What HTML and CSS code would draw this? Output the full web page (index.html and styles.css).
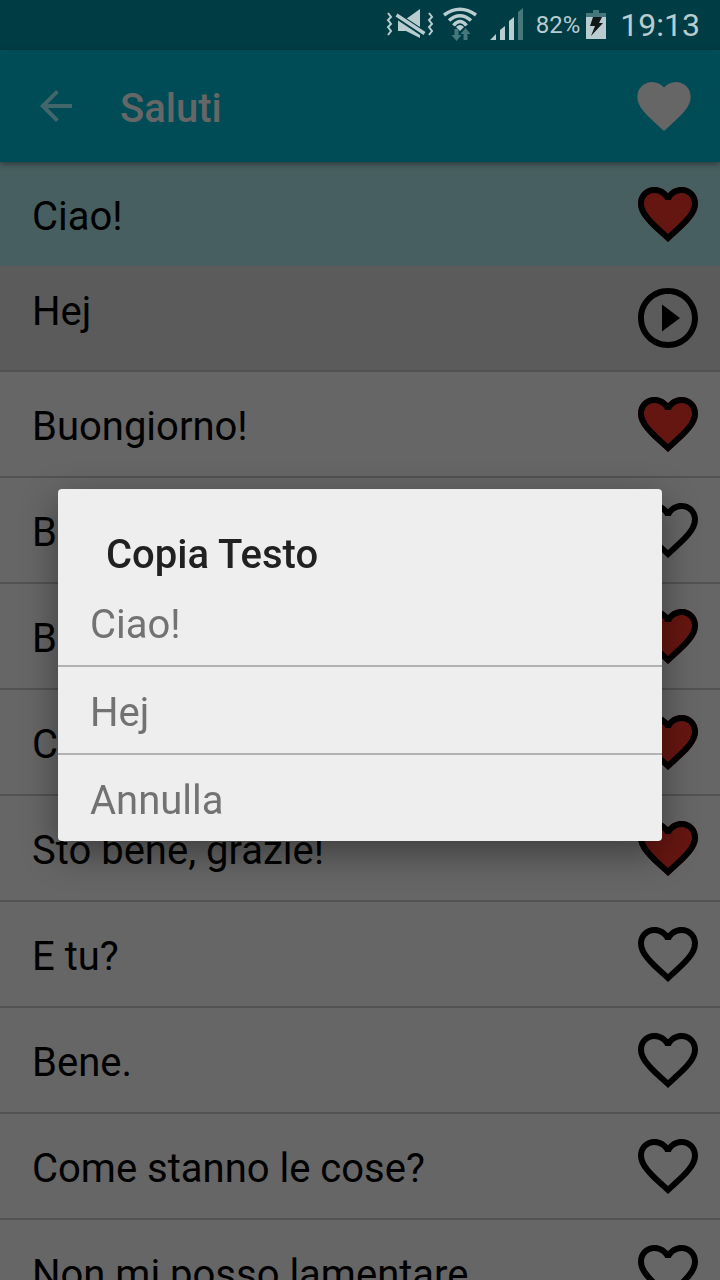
FILE: index.html
```html
<!DOCTYPE html>
<html lang="it">
<head>
    <meta charset="UTF-8">
    <meta name="viewport" content="width=device-width, initial-scale=1.0">
    <title>Saluti</title>
    <link rel="stylesheet" href="styles.css">
</head>
<body>
    <!-- Icone riutilizzate nella lista -->
    <svg class="defs" aria-hidden="true">
        <symbol id="cuore" viewBox="0 0 24 24">
            <path d="M12 21.35l-1.45-1.32C5.4 15.36 2 12.28 2 8.5 2 5.42 4.42 3 7.5 3c1.74 0 3.41.81 4.5 2.09C13.09 3.81 14.76 3 16.5 3 19.58 3 22 5.42 22 8.5c0 3.78-3.4 6.86-8.55 11.54L12 21.35z"/>
        </symbol>
        <symbol id="bordo" viewBox="0 0 24 24">
            <path d="M16.5 3c-1.74 0-3.41.81-4.5 2.09C10.91 3.81 9.24 3 7.5 3 4.42 3 2 5.42 2 8.5c0 3.78 3.4 6.86 8.55 11.54L12 21.35l1.45-1.32C18.6 15.36 22 12.28 22 8.5 22 5.42 19.58 3 16.5 3zm-4.4 15.55l-.1.1-.1-.1C7.14 14.24 4 11.39 4 8.5 4 6.5 5.5 5 7.5 5c1.54 0 3.04.99 3.57 2.36h1.87C13.46 5.99 14.96 5 16.5 5c2 0 3.5 1.5 3.5 3.5 0 2.89-3.14 5.74-7.9 10.05z"/>
        </symbol>
    </svg>

    <!-- Barra di stato -->
    <div class="status">
        <svg class="ico-muto" viewBox="0 0 52 38" width="52" height="38">
            <path d="M14 13h8l14-10v29l-14-7h-8z" fill="#b9cccf"/>
            <path d="M11 8.500l31 20.500" stroke="#003c43" stroke-width="6.500"/>
            <path d="M12.500 9l28 18.500" stroke="#b9cccf" stroke-width="3.500"/>
            <path d="M4 7l3 4-3 3 3 4-3 3 3 4-3 4M45 7l3 4-3 3 3 4-3 3 3 4-3 4" fill="none" stroke="#b9cccf" stroke-width="2"/>
        </svg>
        <svg class="ico-wifi" viewBox="0 0 36 40" width="36" height="40">
            <g fill="none" stroke="#b9cccf" stroke-width="3.500">
                <path d="M2 10Q18-1.500 34 10"/>
                <path d="M7 15.500Q18 6 29 15.500"/>
                <path d="M11.500 20.500Q18 12.500 24.500 20.500"/>
            </g>
            <path d="M14 22q4-4 8 0l-4 4z" fill="#b9cccf"/>
            <path d="M12.500 24h4v6h3l-5 6-5-6h3zM21.500 35v-6h-3l5-6 5 6h-3v6z" fill="#46777c"/>
        </svg>
        <svg class="ico-segnale" viewBox="0 0 34 34" width="34" height="34">
            <path d="M0 32l6-6v6zM10 32V22l5-4v14zM19 32V13l5-4v23z" fill="#b9cccf"/>
            <path d="M28 32V4l5-4v32z" fill="#46777c"/>
        </svg>
        <span class="carica">82%</span>
        <svg class="ico-batteria" viewBox="0 0 20 32" width="20" height="32">
            <path d="M0 4h7V1h6v3h7v5H0z" fill="#46777c"/>
            <path d="M0 8h20v22H0z" fill="#b9cccf"/>
            <path d="M7 8h9l-3 6h4L5 27l4-10H4z" fill="#101818"/>
        </svg>
        <span class="ora">19:13</span>
    </div>

    <header class="toolbar">
        <button class="btn" aria-label="Indietro">
            <svg class="ico-indietro" viewBox="0 0 24 24"><path d="M20 11H7.830l5.590-5.590L12 4l-8 8 8 8 1.410-1.410L7.830 13H20v-2z"/></svg>
        </button>
        <h1>Saluti</h1>
        <button class="btn" aria-label="Preferiti">
            <svg class="ico-preferiti"><use href="#cuore"/></svg>
        </button>
    </header>

    <!-- Lista delle frasi -->
    <ul class="lista">
        <li class="riga attiva">
            <span>Ciao!</span>
            <button class="btn" aria-label="Preferito"><svg class="ico"><use class="rosso" href="#cuore"/><use href="#bordo"/></svg></button>
        </li>
        <li class="riga traduzione">
            <span>Hej</span>
            <button class="btn" aria-label="Ascolta">
                <svg class="ico" viewBox="0 0 24 24"><path d="M10 16.500l6-4.500-6-4.500v9zM12 2C6.480 2 2 6.480 2 12s4.480 10 10 10 10-4.480 10-10S17.520 2 12 2zm0 18c-4.410 0-8-3.590-8-8s3.590-8 8-8 8 3.590 8 8-3.590 8-8 8z"/></svg>
            </button>
        </li>
        <li class="riga">
            <span>Buongiorno!</span>
            <button class="btn" aria-label="Preferito"><svg class="ico"><use class="rosso" href="#cuore"/><use href="#bordo"/></svg></button>
        </li>
        <li class="riga">
            <span>B</span>
            <button class="btn" aria-label="Preferito"><svg class="ico"><use href="#bordo"/></svg></button>
        </li>
        <li class="riga">
            <span>B</span>
            <button class="btn" aria-label="Preferito"><svg class="ico"><use class="rosso" href="#cuore"/><use href="#bordo"/></svg></button>
        </li>
        <li class="riga">
            <span>C</span>
            <button class="btn" aria-label="Preferito"><svg class="ico"><use class="rosso" href="#cuore"/><use href="#bordo"/></svg></button>
        </li>
        <li class="riga">
            <span>Sto bene, grazie!</span>
            <button class="btn" aria-label="Preferito"><svg class="ico"><use class="rosso" href="#cuore"/><use href="#bordo"/></svg></button>
        </li>
        <li class="riga">
            <span>E tu?</span>
            <button class="btn" aria-label="Preferito"><svg class="ico"><use href="#bordo"/></svg></button>
        </li>
        <li class="riga">
            <span>Bene.</span>
            <button class="btn" aria-label="Preferito"><svg class="ico"><use href="#bordo"/></svg></button>
        </li>
        <li class="riga">
            <span>Come stanno le cose?</span>
            <button class="btn" aria-label="Preferito"><svg class="ico"><use href="#bordo"/></svg></button>
        </li>
        <li class="riga">
            <span>Non mi posso lamentare</span>
            <button class="btn" aria-label="Preferito"><svg class="ico"><use href="#bordo"/></svg></button>
        </li>
    </ul>

    <!-- Finestra per copiare il testo -->
    <div class="overlay">
        <div class="finestra" role="dialog" aria-labelledby="titolo">
            <h2 id="titolo">Copia Testo</h2>
            <button class="voce">Ciao!</button>
            <button class="voce">Hej</button>
            <button class="voce">Annulla</button>
        </div>
    </div>
</body>
</html>
```
FILE: styles.css
```css
* {
    box-sizing: border-box;
}

body {
    margin: 0;
    height: 100vh;
    overflow: hidden;
    display: flex;
    flex-direction: column;
    background-color: #666;
    color: #000;
    font-family: Roboto, "Liberation Sans", sans-serif;
    font-size: 40px;
    line-height: 48px;
}

h1, h2 {
    margin: 0;
    font-size: 40px;
    font-weight: 500;
}

.defs {
    display: none;
}

.btn {
    display: flex;
    padding: 0;
    border: none;
    background: none;
    color: inherit;
    cursor: pointer;
}

/* Barra di stato */
.status {
    flex: none;
    display: flex;
    align-items: center;
    justify-content: flex-end;
    height: 50px;
    padding-right: 20px;
    background-color: #003c43;
    color: #b9cccf;
    line-height: 50px;
}

.ico-wifi {
    margin-left: 6px;
}

.ico-segnale {
    margin: 0 12px;
}

.carica {
    font-size: 24px;
}

.ico-batteria {
    margin: 0 14px 0 6px;
}

.ora {
    font-size: 32px;
}

/* Barra in alto */
.toolbar {
    flex: none;
    display: flex;
    align-items: center;
    height: 112px;
    padding: 0 24px 0 32px;
    background-color: #004c56;
    color: #666;
    box-shadow: 0 2px 6px rgba(0, 0, 0, 0.4);
    z-index: 1;
}

.toolbar h1 {
    flex: 1;
    padding: 6px 0 0 40px;
}

.ico-indietro {
    width: 48px;
    height: 48px;
    fill: #42666a;
}

.ico-preferiti {
    width: 64px;
    height: 64px;
    fill: #666;
}

/* Lista */
.lista {
    margin: 0;
    padding: 0;
    list-style: none;
}

.riga {
    display: flex;
    align-items: center;
    justify-content: space-between;
    height: 106px;
    padding: 0 16px 0 32px;
    border-bottom: 2px solid #525252;
}

.riga span {
    padding-top: 6px;
}

.riga.attiva {
    height: 104px;
    border-bottom: none;
    background-color: #475f60;
}

.riga.traduzione {
    background-color: #5b5b5b;
}

.riga.traduzione span {
    padding: 0 0 12px;
}

.ico {
    width: 72px;
    height: 72px;
    fill: #000;
}

.rosso {
    fill: #661611;
}

/* Finestra */
.overlay {
    position: fixed;
    inset: 50px 0 0;
    z-index: 2;
    display: flex;
    align-items: center;
    padding: 0 58px;
}

.finestra {
    flex: 1;
    overflow: hidden;
    border-radius: 4px;
    background-color: #eee;
    box-shadow: 0 12px 36px rgba(0, 0, 0, 0.4);
}

.finestra h2 {
    padding: 42px 48px 0;
    color: #212121;
}

.voce {
    display: block;
    width: 100%;
    height: 88px;
    padding: 6px 32px 0;
    border: none;
    border-bottom: 2px solid #b2b2b2;
    background: none;
    color: #727272;
    font: inherit;
    text-align: left;
    cursor: pointer;
}

.voce:last-child {
    height: 86px;
    border-bottom: none;
}
```
